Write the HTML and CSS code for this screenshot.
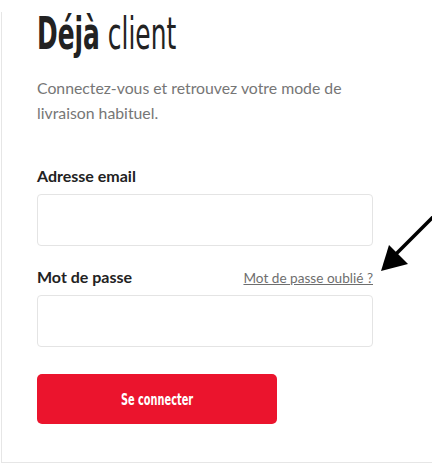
FILE: index.html
```html
<!DOCTYPE html>
<html>
<head>
    <title>Déjà client</title>
    <link rel="stylesheet" href="styles.css">
</head>
<body>
    <div class="panel">
        <h1 class="title"><span class="title-inner"><b>Déjà</b> client</span></h1>
        <p class="intro">Connectez-vous et retrouvez votre mode de livraison habituel.</p>

        <form class="login-form">
            <div class="field">
                <label class="field-label" for="email">Adresse email</label>
                <input class="field-input" id="email" type="email">
            </div>

            <div class="field">
                <div class="field-head">
                    <label class="field-label" for="password">Mot de passe</label>
                    <a class="forgot" href="#">Mot de passe oublié ?</a>
                </div>
                <input class="field-input" id="password" type="password">
            </div>

            <button class="submit" type="button"><span class="submit-text">Se connecter</span></button>
        </form>
    </div>

    <!-- annotation arrow pointing at the forgot link -->
    <svg class="arrow" width="60" height="70" viewBox="0 0 60 70">
        <line x1="62" y1="2" x2="20" y2="44" stroke="#000" stroke-width="3.5"/>
        <polygon points="7,59 15,33 34,52" fill="#000"/>
    </svg>
</body>
</html>
```

FILE: styles.css
```css
body {
    margin: 0;
    padding: 0;
    background-color: #fff;
    font-family: Lato, "Open Sans", sans-serif;
    position: relative;
}

.panel {
    margin-top: 12px;
    border-left: 1px solid #e6e6e6;
    border-bottom: 1px solid #e6e6e6;
    margin-left: 1px;
    padding: 0 58px 40px 35px;
    height: 410px;
}

.title {
    margin: 0;
    font-family: "DejaVu Sans Condensed", "DejaVu Sans", sans-serif;
    font-size: 45px;
    font-weight: 400;
    line-height: 44px;
    color: #222;
    white-space: nowrap;
}

.title-inner {
    display: inline-block;
    transform: scaleX(0.615);
    transform-origin: left center;
}

.title b {
    font-weight: 700;
}

.intro {
    margin: 19px 0 0;
    font-size: 15.8px;
    line-height: 25px;
    color: #767676;
    width: 320px;
}

.login-form {
    margin-top: 41px;
}

.field {
    margin-bottom: 21px;
}

.field-head {
    display: flex;
    justify-content: space-between;
    align-items: baseline;
    width: 336px;
}

.field-label {
    display: block;
    font-size: 16px;
    font-weight: 700;
    line-height: 20px;
    color: #222;
    margin-bottom: 8px;
}

.forgot {
    font-size: 13.6px;
    color: #6e6e6e;
    text-decoration: underline;
}

.field-input {
    display: block;
    box-sizing: border-box;
    width: 336px;
    height: 52px;
    border: 1px solid #e4e4e4;
    border-radius: 4px;
    background: #fff;
}

.submit {
    display: block;
    margin-top: 27px;
    width: 240px;
    height: 50px;
    border: none;
    border-radius: 5px;
    background-color: #eb142d;
    color: #fff;
    font-family: "DejaVu Sans Condensed", "DejaVu Sans", sans-serif;
    font-weight: 700;
    font-size: 16px;
    cursor: pointer;
}

.submit-text {
    display: inline-block;
    transform: scaleX(0.68);
}

.arrow {
    position: absolute;
    left: 374px;
    top: 212px;
}
```
